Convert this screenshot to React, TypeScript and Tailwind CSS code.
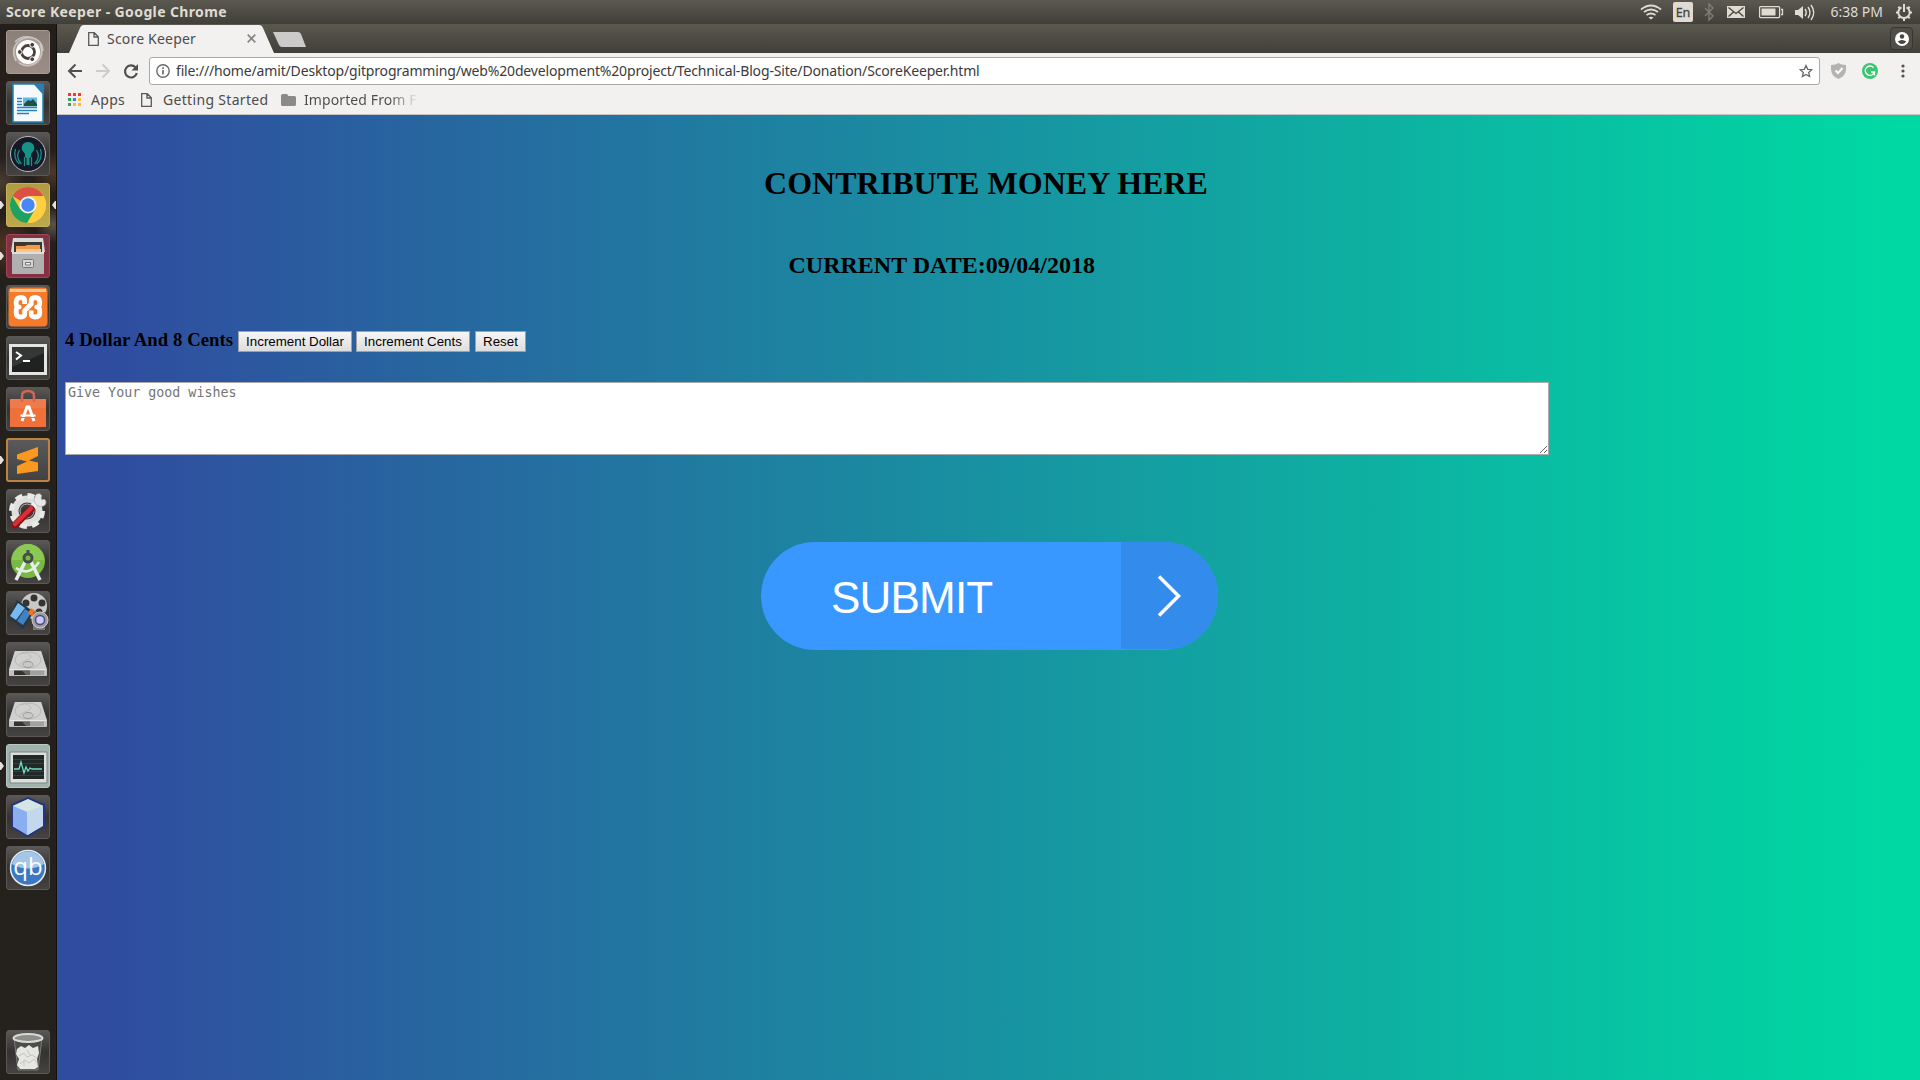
import React from "react";

const UI = "font-['Noto_Sans',sans-serif]";

function Tile({
  children,
  className = "bg-gradient-to-b from-[#5a5856] via-[#353331] to-[#454341] border-[#5b5957]",
  left = false,
  right = false,
}: {
  children: React.ReactNode;
  className?: string;
  left?: boolean;
  right?: boolean;
}) {
  return (
    <div className="relative flex h-11 w-full shrink-0 pl-[6px]">
      {left && (
        <svg className="absolute top-[17px] left-0" width="4" height="10">
          <path d="M0 1h1l3 4-3 4H0z" fill="#e4e2df" />
        </svg>
      )}
      <div className={"h-11 w-11 overflow-hidden rounded-[3px] border " + className}>
        <svg className="-m-px block" width="44" height="44" viewBox="0 0 44 44">
          {children}
        </svg>
      </div>
      {right && (
        <svg className="absolute top-[17px] right-0" width="4" height="10">
          <path d="M4 1H3L0 5l3 4h1z" fill="#e4e2df" />
        </svg>
      )}
    </div>
  );
}

function Disk() {
  return (
    <>
      <path d="M9 9h26l6 18v6q0 1-1 1H4q-1 0-1-1v-6z" fill="#b4b4b3" />
      <path d="M9 9h26l5.500 18H3.500z" fill="#d0d0cf" />
      <path d="M3 27h38v6.500H3z" fill="#c4c4c3" />
      <path d="M8 28.500h16v4.500H8z" fill="#33322f" />
      <path d="M16 28.500h22v4.500H20z" fill="#8b8b89" opacity=".6" />
      <path d="M4 27.500h36" stroke="#e8e8e7" />
      <ellipse cx="22" cy="18" rx="13" ry="8" fill="none" stroke="#b8b8b7" />
      <ellipse cx="22" cy="22.500" rx="5" ry="3" fill="#c9c9c9" stroke="#999" />
      <path d="M15 12c6-3 13 2 8 5s-10 3-9 7" fill="none" stroke="#bababa" />
    </>
  );
}

function Launcher() {
  return (
    <aside className="flex h-full w-[57px] shrink-0 flex-col gap-[7px] border-r border-[#12110f] bg-[#24211c] pt-[6px] pb-[6px] [background-image:radial-gradient(circle_at_10%_21%,#6a3d25aa_0,transparent_30px),radial-gradient(circle_at_95%_19%,#80776d99_0,transparent_18px),radial-gradient(circle_at_0%_15%,#5d4b3caa_0,transparent_26px),radial-gradient(circle_at_96%_14%,#6a4a2e99_0,transparent_22px),linear-gradient(#241f1b,#24211c_50%,#25211d)]">
      <Tile className="border-[#a89b94] bg-gradient-to-b from-[#8b7f79] to-[#9c8d87]">
        <circle cx="22" cy="22" r="15" fill="#b3a7a0" opacity=".7" />
        <path d="M10 31C2 14 17 4 30 9M13 33c12 8 28-4 21-19M9 12C18 3 36 6 37 21" fill="none" stroke="#cdc4be" strokeWidth="1.500" />
        <circle cx="22" cy="22" r="12" fill="#fff" />
        <circle cx="22" cy="22" r="6.500" fill="none" stroke="#4a3f3c" strokeWidth="2.800" />
        <g fill="#4a3f3c" stroke="#fff" strokeWidth="1">
          <circle cx="13.800" cy="22" r="2.400" />
          <circle cx="26.200" cy="14.800" r="2.400" />
          <circle cx="26.200" cy="29.200" r="2.400" />
        </g>
      </Tile>
      <Tile>
        <path d="M7 3h22l8 9v29H7z" fill="#f6fafc" stroke="#1d84b8" strokeWidth="1.500" />
        <path d="M27 2.500h11v12z" fill="#2a7fb0" />
        <path d="M17 16.500h14v9H17z" fill="#61b9e9" />
        <path d="M18 23l4-4 3 1 2-2 4 5v2H18z" fill="#244d3b" />
        <path d="M11 17.500h5M11 20.500h5M11 23.500h5M11 26.500h20M11 29.500h20M11 32.500h12" stroke="#2783b6" strokeWidth="1.500" />
      </Tile>
      <Tile>
        <circle cx="22" cy="22" r="17.500" fill="#151827" stroke="#b9bcbe" strokeWidth="1" />
        <path d="M22 10c-5 0-7 4-6 8l3 4v3l1.500 1V33h3v-7l1.500-1v-3l3-4c1-4-1-8-6-8z" fill="#179287" />
        <path d="M18.500 25v9M25.500 25v9M13.500 18c-3 5-2 10 2 14M30.500 18c3 5 2 10-2 14M9.500 17c-2 6 0 12 4 15M34.500 17c2 6 0 12-4 15" fill="none" stroke="#179287" strokeWidth="1.300" />
      </Tile>
      <Tile left right className="border-[#c7b25d] bg-gradient-to-b from-[#b19b43] to-[#bda94b]">
        <circle cx="22" cy="22" r="18" fill="#fbc83c" />
        <path d="M22 22L6.400 13A18 18 0 0 1 37.600 13H22z" fill="#dd5144" />
        <path d="M22 22l-7.800 4.500L6.400 13A18 18 0 0 0 21 40l7.500-13z" fill="#1da261" />
        <path d="M22 13h15.600A18 18 0 0 1 22 40l7.800-13.500z" fill="#ffce43" />
        <circle cx="22" cy="22" r="8.500" fill="#f3f6fa" />
        <circle cx="22" cy="22" r="6.700" fill="#4788f4" />
      </Tile>
      <Tile left className="border-[#9f4858] bg-gradient-to-b from-[#7d3543] to-[#8a2e42]">
        <path d="M7 4h30l2 14H5z" fill="#d8d8d6" />
        <path d="M8 8h28v11H8z" fill="#3b3733" />
        <path d="M10 12h9l2-1h13v8H10z" fill="#f09a4c" />
        <path d="M10 15h25v4H10z" fill="#ffc482" />
        <path d="M6 18h32v22H6z" fill="#b0b0b0" />
        <path d="M6 18h32v2H6z" fill="#dedede" />
        <rect x="16.500" y="25.500" width="11" height="8" rx="1" fill="#d5d5d5" stroke="#777" />
        <path d="M19.500 28.500h5v2.500h-5z" fill="#eee" stroke="#777" />
      </Tile>
      <Tile>
        <rect x="2.500" y="2.500" width="39" height="39" rx="4" fill="#f47b2a" />
        <path d="M4 4h36v3H4z" fill="#ffc595" />
        <path
          d="M19 19v-2.500q0-4-4-4t-4.500 4V19q0 2.500 3 3-3 .5-3 3v3q0 4 4.500 4t4-4V25.500L25.500 19v-2.500q0-4 4-4t4.500 4V19q0 2.500-3 3 3 .5 3 3v3q0 4-4.500 4t-4-4V25.500"
          fill="none"
          stroke="#fff"
          strokeWidth="4.800"
          strokeLinejoin="round"
          transform="translate(-.3 0)"
        />
      </Tile>
      <Tile>
        <path d="M3 8h38v31H3z" fill="#e4e4e3" />
        <path d="M6 11h32v25H6z" fill="#202121" />
        <path d="M6 11h32v6L6 31z" fill="#444" opacity=".6" />
        <path d="M10 16l5 3.500-5 4M17 25h7" fill="none" stroke="#fff" strokeWidth="2" />
      </Tile>
      <Tile>
        <path d="M4 12h36v28H4z" fill="#f0703a" />
        <path d="M4 12h36v9H4z" fill="#ee7b4d" />
        <path d="M16 15V9q0-5 6-5t6 5v6" fill="none" stroke="#d66451" strokeWidth="2.500" />
        <path d="M16 34l5-14h2l5 14" fill="none" stroke="#fff" strokeWidth="3" />
        <path d="M14.500 28.500h15" stroke="#fff" strokeWidth="2" />
        <path d="M14 30.500h16" stroke="#f0703a" strokeWidth="1" />
      </Tile>
      <Tile left className="border-2 border-[#c08244] bg-gradient-to-b from-[#5a5a5a] to-[#424242]">
        <path d="M11 16.500L32 9v9l-9 4.500 9 2V33L11 36v-8l10-4.500-10-2.500z" fill="#fa981f" transform="translate(-1 -1)" />
      </Tile>
      <Tile>
        <circle cx="21" cy="22" r="12" fill="none" stroke="#dededc" strokeWidth="7" />
        <circle cx="21" cy="22" r="15.500" fill="none" stroke="#e9e9e8" strokeWidth="5" strokeDasharray="7 5.170" />
        <circle cx="21" cy="22" r="7" fill="none" stroke="#b4b4b4" />
        <path d="M24 20l8-8" stroke="#f2f2f2" strokeWidth="5" />
        <path d="M29 8c0-5 9-4 6 1l1 2c4-3 6 5 1 6-6 2-11-4-8-9z" fill="#e7e7e7" stroke="#aaa" strokeWidth=".7" />
        <path d="M9 36l16-16" stroke="#8e1118" strokeWidth="7" strokeLinecap="round" />
        <path d="M9 35l16-15.500" stroke="#d83035" strokeWidth="4.500" strokeLinecap="round" />
      </Tile>
      <Tile>
        <circle cx="22" cy="21" r="17" fill="#78b943" />
        <path d="M6 20a16 16 0 0 1 32 0z" fill="#8bc854" />
        <path d="M20 20L10 40M24 20l10 20" stroke="#e8ecea" strokeWidth="3.500" />
        <path d="M10 28q13 9 23-6" fill="none" stroke="#e5eee3" strokeWidth="2.500" />
        <circle cx="22" cy="18" r="4" fill="#78b943" stroke="#454f49" strokeWidth="3" />
        <path d="M20.500 10h3v5h-3z" fill="#454f49" />
      </Tile>
      <Tile>
        <circle cx="28" cy="15" r="13" fill="#c9c9c8" />
        <g fill="#343434">
          <circle cx="28" cy="7" r="3.500" />
          <circle cx="20" cy="12" r="3.500" />
          <circle cx="36" cy="12" r="3.500" />
          <circle cx="33" cy="21" r="3.500" />
          <circle cx="23" cy="21" r="3" />
        </g>
        <path d="M11 9l17 12-11 17L3 26z" fill="#243747" />
        <path d="M12 12l7 5-9 12-6-4z" fill="#75baf0" />
        <path d="M19 18l6 4-8 12-6-4z" fill="#3f83c5" />
        <path d="M25 17l6 4-4 5-5-4z" fill="#f17424" />
        <path d="M27 21h12v18H27z" fill="#777" />
        <circle cx="34" cy="29" r="8" fill="#9a9aa0" stroke="#ccc" />
        <circle cx="34" cy="29" r="4.500" fill="#c8caff" stroke="#4e4b76" strokeWidth="1.500" />
      </Tile>
      <Tile><Disk /></Tile>
      <Tile><Disk /></Tile>
      <Tile left className="border-[#b6c9c5] bg-[#9fb2ae]">
        <path d="M4 8h37v31H4z" fill="#dcdedc" stroke="#7c8784" />
        <path d="M7 11h31v24H7z" fill="#202928" />
        <path d="M7 15.500h31M7 19.500h31M7 27.500h31M7 31.500h31" stroke="#36413f" />
        <path d="M8 25h5l2-7 3 11 2-6 2 4 2-3 2 1h10" fill="none" stroke="#71dbc0" strokeWidth="1.300" />
      </Tile>
      <Tile>
        <path d="M22 3l16 7v21l-16 10L6 32V10z" fill="#b5cff3" stroke="#28347d" strokeWidth="2" />
        <path d="M22 4l15 7-16 6L7 11z" fill="#d4e6e4" />
        <path d="M7 11l14 6v23L7 31z" fill="#8aaff0" />
        <path d="M21 17l16-6v20L21 40z" fill="#c4d8ec" />
      </Tile>
      <Tile>
        <circle cx="22" cy="22" r="17.500" fill="#3c78c1" stroke="#e4eaf0" strokeWidth="1.500" />
        <path d="M6 18a16.500 16.500 0 0 1 32 0q-16 9-32 0z" fill="#a4c6e8" />
        <text x="22" y="29" fontFamily="Open Sans" fontSize="24" textAnchor="middle" fill="#fff">qb</text>
      </Tile>
      <div className="mt-auto">
        <Tile>
          <path d="M8 8l4 32h20l4-32z" fill="#4c4c4a" stroke="#7b7b79" />
          <path d="M11 19l4-3 4 2 4-3 4 3 5-2 1 7-2 6 1 8-3 2H14l-3-4 2-6-3-5z" fill="#e6e6e3" />
          <path d="M13 26l5-3 3 4 5-2 5 3M14 34l5-4 4 3 5-4 3 4M21 20l3 5M18 31v5" fill="none" stroke="#c2c2bf" />
          <ellipse cx="22" cy="8" rx="14.500" ry="4" fill="#8d8d8a" stroke="#d8d8d5" strokeWidth="2" />
        </Tile>
      </div>
    </aside>
  );
}

function TopPanel() {
  return (
    <header className={"flex h-6 shrink-0 items-center bg-gradient-to-b from-[#5b594f] to-[#403f39] pl-[6px] text-[#dfdbd2] " + UI}>
      <span className="text-[14px] leading-6 font-bold tracking-[0.38px] whitespace-nowrap">Score Keeper - Google Chrome</span>
      <svg className="ml-auto shrink-0" width="280" height="24" viewBox="1640 0 280 24" fill="none" stroke="#dfdbd2">
        <path d="M1641 9.500q10-8 20 0M1644 12q7-5 14 0M1646.500 15q4.500-3 9 0" strokeWidth="1.800" />
        <path d="M1648.500 17.500q2.500-1.500 5 0l-2.500 2z" fill="#dfdbd2" stroke="none" />
        <rect x="1673" y="2" width="20" height="20" rx="2" fill="#dfdbd2" stroke="none" />
        <text x="1683" y="17" textAnchor="middle" fontFamily="Noto Sans" fontSize="12.500" fill="#46443e" stroke="#46443e" strokeWidth=".3">En</text>
        <path d="M1705 8l8 8-4 4V4l4 4-8 8" stroke="#807d75" strokeWidth="1.400" />
        <rect x="1727" y="6" width="18" height="12" fill="#dfdbd2" stroke="none" />
        <path d="M1728.500 7.500l7.500 6 7.500-6M1728.500 16.500l5-4.500M1743.500 16.500l-5-4.500" stroke="#46443e" strokeWidth="1.300" />
        <rect x="1759.600" y="6.600" width="20" height="11" rx="1" strokeWidth="1.300" />
        <path d="M1761.500 8.500h14v7h-14z" fill="#dfdbd2" stroke="none" />
        <path d="M1781 9.500h1.500v5h-1.500" strokeWidth="1.300" />
        <path d="M1795 10h3l5-4v13l-5-4h-3z" fill="#dfdbd2" stroke="none" />
        <path d="M1805 9q2.500 3.500 0 7M1808 7q4 5.500 0 11M1811 5q5.500 7.500 0 15" strokeWidth="1.500" />
        <text x="1830.500" y="17" textLength="52.500" lengthAdjust="spacingAndGlyphs" fontFamily="Noto Sans" fontSize="14" fill="#dfdbd2" stroke="none">6:38 PM</text>
        <path d="M1901.500 7.300a5.700 5.700 0 1 0 5 0" strokeWidth="2" />
        <path d="M1904 4v8" strokeWidth="2" />
        <path d="M1896 12.500h3M1909 12.500h3M1904 18v3M1898.300 6.800l2 2M1909.700 6.800l-2 2M1898.300 18.200l2-2M1909.700 18.200l-2-2" strokeWidth="2" />
      </svg>
    </header>
  );
}

function FileIcon() {
  return (
    <svg width="11" height="14" viewBox="0 0 11 14" fill="none" stroke="#5a5a5a" strokeWidth="1.300" className="shrink-0">
      <path d="M.7.700h5.600l4 4v8.600H.7zM6 .7V5h4.300" />
    </svg>
  );
}

function TabStrip() {
  return (
    <div className="flex h-[29px] shrink-0 items-end bg-gradient-to-b from-[#5b594f] to-[#403f39]">
      <div className="relative ml-3 h-7 w-[205px]">
        <svg className="absolute inset-0" width="205" height="28">
          <path d="M0 28L11 3Q12 0 15 0H190Q193 0 194 3L205 28z" fill="#f2f1f0" />
        </svg>
        <div className="relative flex h-full items-center pb-px pl-[19px]">
          <FileIcon />
          <span className="ml-2 text-[14px] tracking-[0.2px] whitespace-nowrap text-[#4c4c4c]">Score Keeper</span>
          <svg className="mr-[18px] ml-auto" width="9" height="9" stroke="#868684" strokeWidth="1.700">
            <path d="M.7.700l7.600 7.600M8.300.700L.7 8.300" />
          </svg>
        </div>
      </div>
      <svg className="mb-[6px] -ml-[3px]" width="36" height="15">
        <path d="M2 0h25q2 0 3 2l5 13H11q-2 0-3-2z" fill="#cccbca" />
      </svg>
      <div className="mr-[7px] mb-[3px] ml-auto flex h-[23px] w-[23px] items-center justify-center rounded-[4px] border border-[#38372f] bg-[#504e46]">
        <svg width="14" height="14">
          <circle cx="7" cy="7" r="7" fill="#fff" />
          <circle cx="7" cy="4.500" r="2.200" fill="#46443e" />
          <path d="M2.700 9.500q4.300-3 8.600 0-4.300 5-8.600 0z" fill="#46443e" />
        </svg>
      </div>
    </div>
  );
}

function Toolbar() {
  return (
    <div className="flex h-9 shrink-0 items-center bg-[#f2f1f0]">
      <svg className="ml-[10px] shrink-0" width="73" height="18" fill="none" strokeWidth="2">
        <path d="M15 9H2M8.500 2.500L2 9l6.500 6.500" stroke="#505050" />
        <path d="M29 9h13M35.500 2.500L42 9l-6.500 6.500" stroke="#cecdcc" />
        <path d="M68.500 5.500A6 6 0 1 0 69.800 11" stroke="#505050" strokeWidth="2.200" />
        <path d="M71 2v6.500h-6.500z" fill="#505050" />
      </svg>
      <div className="ml-[9px] flex h-7 w-[1671px] items-center rounded-[3px] border border-[#aaa9a8] bg-white pl-[6px]">
        <svg width="14" height="14" fill="none" stroke="#6b6b6b" strokeWidth="1.400">
          <circle cx="7" cy="7" r="6.200" />
          <path d="M7 6v4.500M7 3.300V5" strokeWidth="1.700" />
        </svg>
        <span className="ml-[6px] pb-px text-[14px] tracking-[-0.158px] whitespace-nowrap text-[#3b3b3b]">
          file:///home/amit/Desktop/gitprogramming/web%20development%20project/Technical-Blog-Site/Donation/ScoreKeeper.html
        </span>
        <svg className="mr-[6px] ml-auto" width="14" height="14" viewBox="0 0 14 14" fill="none" stroke="#696969" strokeWidth="1.300">
          <path d="M7 1.500l1.700 3.800 4.100.400-3.100 2.700.9 4.100L7 10.400l-3.600 2.100.9-4.100-3.100-2.700 4.100-.400z" />
        </svg>
      </div>
      <svg className="ml-[11px]" width="15" height="16">
        <path d="M0 2q5 0 7.500-2Q10 2 15 2v4q0 7-7.500 10Q0 13 0 6z" fill="#b3b3b3" />
        <path d="M4.500 7.500L7 10l4.500-5" stroke="#fff" strokeWidth="2" fill="none" />
      </svg>
      <svg className="ml-4" width="16" height="16">
        <circle cx="8" cy="8" r="8" fill="#3cc571" />
        <path d="M11.500 4.600A4.700 4.700 0 1 0 12.500 9H9M12.500 9v3.500" fill="none" stroke="#fff" strokeWidth="1.300" />
      </svg>
      <svg className="ml-[23px]" width="4" height="14" fill="#505050">
        <circle cx="2" cy="2" r="1.600" />
        <circle cx="2" cy="7" r="1.600" />
        <circle cx="2" cy="12" r="1.600" />
      </svg>
    </div>
  );
}

const appDots = ["#f03a2e", "#f03a2e", "#f03a2e", "#2fa556", "#3f78f0", "#f8b92c", "#2fa556", "#f8b92c", "#f8b92c"];

function Bookmarks() {
  return (
    <div className="flex h-[26px] shrink-0 items-center border-b border-[#c6c5c3] bg-[#f2f1f0] pb-[4px] text-[14px] whitespace-nowrap text-[#4c4c4c]">
      <div className="ml-[11px] grid grid-cols-3 gap-[2px]">
        {appDots.map((c, i) => (
          <span key={i} className="h-[3px] w-[3px]" style={{ backgroundColor: c }} />
        ))}
      </div>
      <span className="ml-[10px] w-[35px] tracking-[0.3px]">Apps</span>
      <span className="ml-[15px] flex"><FileIcon /></span>
      <span className="ml-[11px] w-[107px] tracking-[0.32px]">Getting Started</span>
      <svg className="ml-[11px]" width="15" height="12">
        <path d="M0 1.500Q0 0 1.500 0H6l1.500 2h6Q15 2 15 3.500v7q0 1.500-1.500 1.500h-12Q0 12 0 10.500z" fill="#8a8a8a" />
      </svg>
      <span className="ml-[8px] w-[114px] overflow-hidden bg-gradient-to-r from-[#4c4c4c] from-75% to-transparent bg-clip-text tracking-[0.1px] text-transparent">
        Imported From F
      </span>
    </div>
  );
}

const nativeButton =
  "h-[21px] border border-[#a0a0a0] bg-gradient-to-b from-[#f6f6f6] to-[#dddddd] text-center font-['Liberation_Sans',sans-serif] text-[13.333px] leading-[19px] whitespace-nowrap text-black";

function Page() {
  return (
    <main className="flex min-h-0 flex-1 flex-col bg-[linear-gradient(90deg,#304c9f_2.500%,#00d8a3_98%)] px-2 font-['Liberation_Serif',serif] text-black">
      <h1 className="mt-[50px] pr-[5px] text-center text-[32px] leading-[37px] font-bold tracking-[0.03px]">CONTRIBUTE MONEY HERE</h1>
      <h2 className="mt-[50px] ml-[723.5px] text-[24px] leading-[27px] font-bold">CURRENT DATE:09/04/2018</h2>
      <div className="mt-[50px] flex h-6 items-start">
        <h3 className="w-[173px] text-[18.72px] leading-[22px] font-bold tracking-[0.06px] whitespace-nowrap">4 Dollar And 8 Cents</h3>
        <button className={nativeButton + " mt-[2px] w-[114px]"}>Increment Dollar</button>
        <button className={nativeButton + " mt-[2px] ml-1 w-[114px]"}>Increment Cents</button>
        <button className={nativeButton + " mt-[2px] ml-[5px] w-[51px]"}>Reset</button>
      </div>
      <textarea
        className="mt-[29px] block h-[73px] w-[1484px] shrink-0 resize border border-[#a9a9a9] bg-white p-[2px] font-['DejaVu_Sans_Mono',monospace] text-[13.333px] leading-[16px] placeholder:text-[#757575]"
        placeholder="Give Your good wishes"
      />
      <button className="mt-[87px] ml-[695.5px] flex h-[108px] w-[457px] overflow-hidden rounded-[54px] bg-[#3898ff] font-['Liberation_Sans',sans-serif] text-white">
        <span className="w-[360.5px] pl-[70.5px] text-left text-[44px] leading-[111px] tracking-[-0.8px]">SUBMIT</span>
        <span className="flex h-[107px] flex-1 items-center bg-[#338beb] pl-[36px]">
          <svg width="26" height="44" fill="none" stroke="#fff" strokeWidth="3.500">
            <path d="M2 2.500l19.500 19.500L2 41.500" />
          </svg>
        </span>
      </button>
    </main>
  );
}

export default function App() {
  return (
    <div className="flex h-[1080px] w-[1920px] flex-col overflow-hidden">
      <TopPanel />
      <div className="flex min-h-0 flex-1">
        <Launcher />
        <div className={"flex min-w-0 flex-1 flex-col " + UI}>
          <TabStrip />
          <Toolbar />
          <Bookmarks />
          <Page />
        </div>
      </div>
    </div>
  );
}
